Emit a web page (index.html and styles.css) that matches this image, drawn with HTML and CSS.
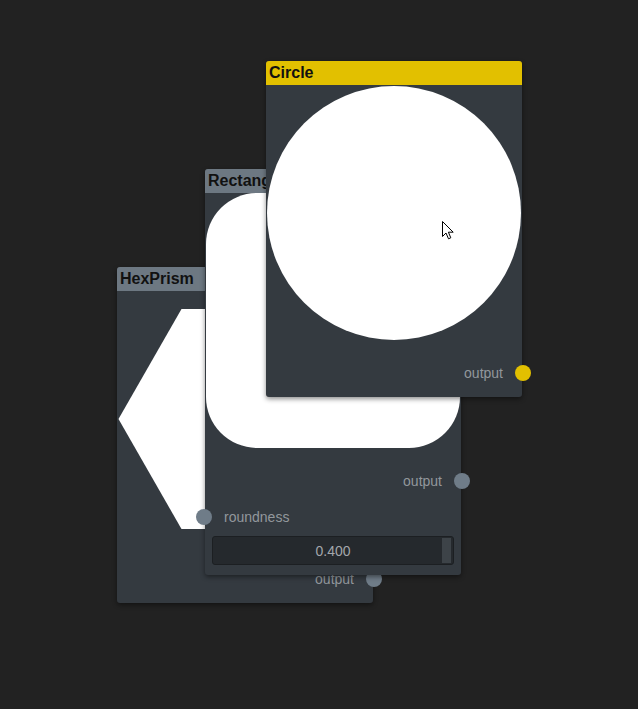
FILE: index.html
```html
<!DOCTYPE html>
<html>
<head>
<meta charset="utf-8">
<link rel="stylesheet" href="styles.css">
</head>
<body>
<div class="canvas">
  <div class="node node-hex">
    <div class="node-header header-gray">HexPrism</div>
    <svg class="preview" width="256" height="256" viewBox="0 0 256 256">
      <polygon fill="#fff" points="1.5,128 64.5,18 191.5,18 254.5,128 191.5,238 64.5,238"/>
    </svg>
    <div class="rows">
      <div class="row row-out">output<span class="port port-gray port-right"></span></div>
    </div>
  </div>

  <div class="node node-rect">
    <div class="node-header header-gray">Rectangle</div>
    <svg class="preview" width="256" height="256" viewBox="0 0 256 256">
      <rect x="1" y="0" width="254" height="255" rx="51" ry="51" fill="#fff"/>
    </svg>
    <div class="rows">
      <div class="row row-out">output<span class="port port-gray port-right"></span></div>
      <div class="row row-in"><span class="port port-gray port-left"></span>roundness</div>
    </div>
    <div class="slider">
      <span class="slider-value">0.400</span>
      <span class="slider-handle"></span>
    </div>
  </div>

  <div class="node node-circle">
    <div class="node-header header-yellow">Circle</div>
    <svg class="preview" width="256" height="256" viewBox="0 0 256 256">
      <circle cx="128" cy="128" r="127" fill="#fff"/>
    </svg>
    <div class="rows">
      <div class="row row-out">output<span class="port port-yellow port-right"></span></div>
    </div>
  </div>

  <svg class="cursor" width="13" height="20" viewBox="0 0 13 20">
    <path d="M0.5,0.5 L0.5,15.5 L4,12 L6.5,17.8 L8.8,16.8 L6.4,11.2 L11.2,11.2 Z" fill="#fff" stroke="#000" stroke-width="1" stroke-linejoin="miter"/>
  </svg>
</div>
</body>
</html>
```

FILE: styles.css
```css
html, body {
  margin: 0;
  padding: 0;
  background: #222222;
}

.canvas {
  position: relative;
  width: 638px;
  height: 709px;
  overflow: hidden;
  background: #222222;
  font-family: "Liberation Sans", Arial, sans-serif;
}

.node {
  position: absolute;
  width: 256px;
  background: #343a40;
  border-radius: 3px;
  box-shadow: 0 2px 5px rgba(0, 0, 0, 0.45);
}

.node-hex { left: 117px; top: 267px; }
.node-rect { left: 205px; top: 169px; padding-bottom: 10px; }
.node-circle { left: 266px; top: 61px; }

.node-header {
  height: 24px;
  line-height: 24px;
  padding-left: 3px;
  border-radius: 3px 3px 0 0;
  font-weight: bold;
  font-size: 16px;
  color: #111;
  white-space: nowrap;
  overflow: hidden;
}

.header-gray { background: #6d7882; }
.header-yellow { background: #e2c000; }

.preview {
  display: block;
}

.rows {
  display: flex;
  flex-direction: column;
  gap: 12px;
  padding: 20px 0 12px;
}

.node-rect .rows { padding-bottom: 7px; }

.row {
  position: relative;
  height: 24px;
  display: flex;
  align-items: center;
  font-size: 14px;
  color: #92979c;
}

.row-out {
  justify-content: flex-end;
  padding-right: 19px;
}

.row-in {
  padding-left: 19px;
}

.port {
  position: absolute;
  top: 4px;
  width: 16px;
  height: 16px;
  border-radius: 50%;
}

.port-right { right: -9px; }
.port-left { left: -9px; }

.port-gray { background: #6f7c88; }
.port-yellow { background: #e2c000; }

.slider {
  position: relative;
  margin: 0 7px 0 7px;
  height: 27px;
  background: #25292d;
  border: 1px solid #1c1f22;
  border-radius: 3px;
  display: flex;
  align-items: center;
  justify-content: center;
  font-size: 14px;
  color: #a3a7ab;
}

.slider-handle {
  position: absolute;
  right: 2px;
  top: 1px;
  bottom: 1px;
  width: 9px;
  background: #3d4348;
}

.cursor {
  position: absolute;
  left: 442px;
  top: 221px;
}
```
